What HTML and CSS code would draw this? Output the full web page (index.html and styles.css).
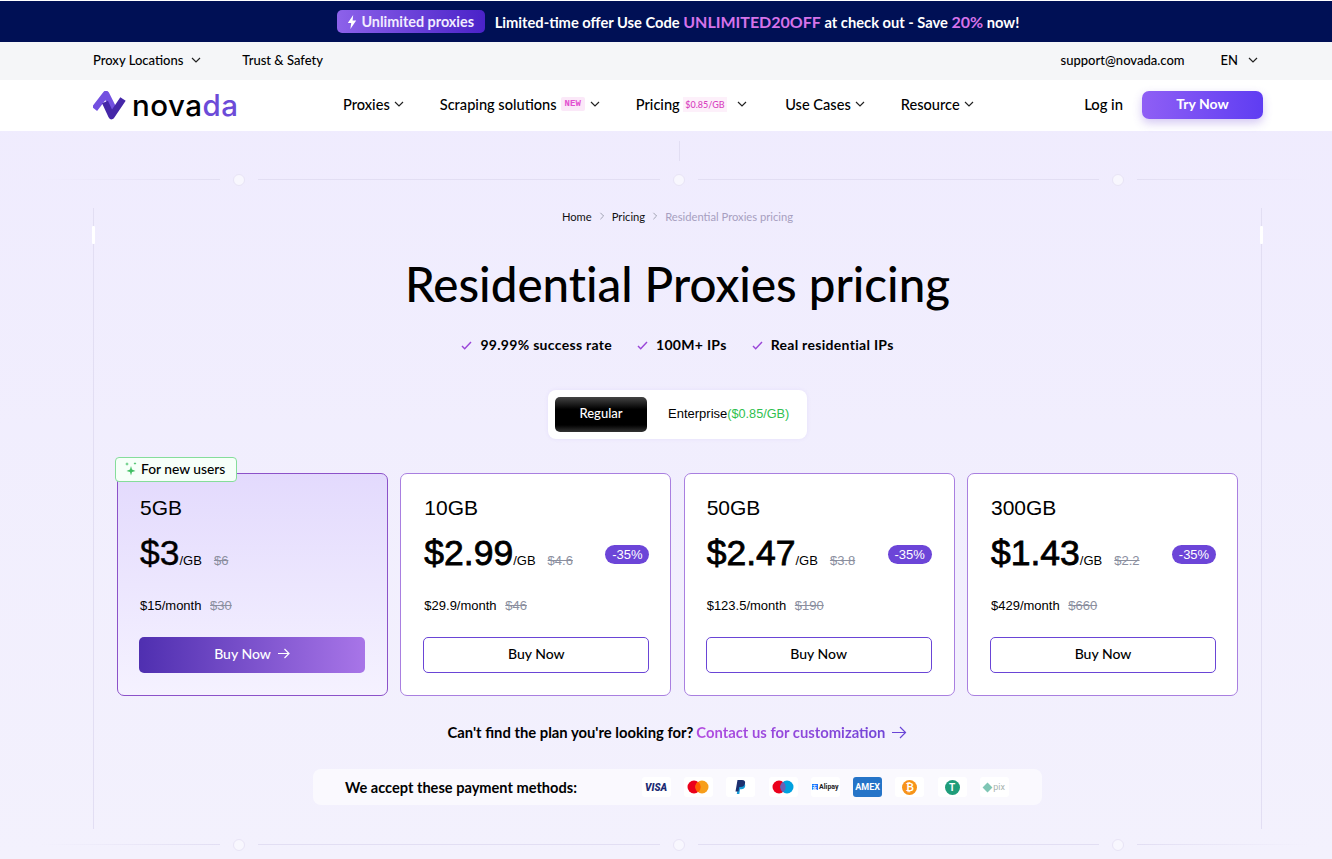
FILE: index.html
```html
<!DOCTYPE html>
<html lang="en">
<head>
  <meta charset="UTF-8" />
  <meta name="viewport" content="width=device-width, initial-scale=1.0"/>
  <title>Residential Proxies pricing</title>
  <link rel="stylesheet" href="styles.css">
</head>
<body>
  <div class="promo">
    <span class="promo-tag">
      <svg width="10" height="14" viewBox="0 0 10 14"><path d="M6.2 0 0.8 8h3.4L3.4 14 9.2 5.6H5.6z" fill="#fff"/></svg>
      Unlimited proxies
    </span>
    <span class="promo-text">Limited-time offer Use Code <b>UNLIMITED20OFF</b> at check out - Save <b>20%</b> now!</span>
  </div>

  <div class="topbar">
    <a class="top-link">Proxy Locations <svg class="chev chev-top" viewBox="0 0 10 6"><path d="M1 1l4 4 4-4"/></svg></a>
    <a class="top-link">Trust &amp; Safety</a>
    <a class="top-link top-mail">support@novada.com</a>
    <a class="top-link top-lang">EN <svg class="chev chev-lang" viewBox="0 0 10 6"><path d="M1 1l4 4 4-4"/></svg></a>
  </div>

  <header class="nav">
    <a class="logo">
      <svg width="33" height="29" viewBox="0 0 33 29" fill="none" stroke-width="6.500" stroke-linejoin="round">
        <path d="M1.500 18 13 3 21 19" stroke="#7350e0"/>
        <path d="M12 11 18.500 25 30 8" stroke="#4527a8"/>
      </svg>
      <span class="logo-text">nova<em>da</em></span>
    </a>
    <nav class="menu">
      <a>Proxies <svg class="chev" viewBox="0 0 10 6"><path d="M1 1l4 4 4-4"/></svg></a>
      <a>Scraping solutions <span class="tag-new">NEW</span> <svg class="chev chev-new" viewBox="0 0 10 6"><path d="M1 1l4 4 4-4"/></svg></a>
      <a>Pricing <span class="tag-price">$0.85/GB</span> <svg class="chev chev-price" viewBox="0 0 10 6"><path d="M1 1l4 4 4-4"/></svg></a>
      <a>Use Cases <svg class="chev" viewBox="0 0 10 6"><path d="M1 1l4 4 4-4"/></svg></a>
      <a>Resource <svg class="chev" viewBox="0 0 10 6"><path d="M1 1l4 4 4-4"/></svg></a>
    </nav>
    <a class="login">Log in</a>
    <a class="try">Try Now</a>
  </header>

  <main class="page">
    <div class="tick"></div>
    <div class="deco">
      <i class="fade-l"></i><u></u><i></i><u></u><i></i><u></u><i class="fade-r"></i>
    </div>

    <section class="frame">
      <span class="notch notch-l"></span>
      <span class="notch notch-r"></span>

      <div class="crumbs">
        <a>Home</a>
        <svg class="crumb-sep" viewBox="0 0 6 10"><path d="M1 1l4 4-4 4"/></svg>
        <a>Pricing</a>
        <svg class="crumb-sep" viewBox="0 0 6 10"><path d="M1 1l4 4-4 4"/></svg>
        <span>Residential Proxies pricing</span>
      </div>

      <h1>Residential Proxies pricing</h1>

      <ul class="perks">
        <li><svg viewBox="0 0 12 10"><path d="M1 5.500l3 3 7-7.500"/></svg>99.99% success rate</li>
        <li><svg viewBox="0 0 12 10"><path d="M1 5.500l3 3 7-7.500"/></svg>100M+ IPs</li>
        <li><svg viewBox="0 0 12 10"><path d="M1 5.500l3 3 7-7.500"/></svg>Real residential IPs</li>
      </ul>

      <div class="switch">
        <button class="switch-on">Regular</button>
        <button class="switch-off">Enterprise<span>($0.85/GB)</span></button>
      </div>

      <div class="plans">
        <article class="plan plan-first">
          <span class="new-users">
            <svg width="13" height="15" viewBox="0 0 13 15" fill="#3fbf63"><path d="M7 5l1 3.500L11.500 10 8 11l-1 3.500L6 11 2.500 10 6 8.500z"/><path d="M3 1l.5 1.500L5 3l-1.500.5L3 5l-.5-1.500L1 3l1.500-.5z"/><path d="M11 1l.4 1.100L12.500 2.500l-1.100.4L11 4l-.4-1.100L9.500 2.500l1.100-.4z"/></svg>
            For new users
          </span>
          <h3>5GB</h3>
          <div class="price"><strong>$3</strong><small>/GB</small><s>$6</s></div>
          <div class="month">$15/month <s>$30</s></div>
          <a class="buy buy-main">Buy Now <svg width="13" height="11" viewBox="0 0 13 11"><path d="M1 5.500h11M7.500 1l4.500 4.500L7.500 10"/></svg></a>
        </article>

        <article class="plan">
          <h3>10GB</h3>
          <div class="price"><strong>$2.99</strong><small>/GB</small><s>$4.6</s><em>-35%</em></div>
          <div class="month">$29.9/month <s>$46</s></div>
          <a class="buy">Buy Now</a>
        </article>

        <article class="plan">
          <h3>50GB</h3>
          <div class="price"><strong>$2.47</strong><small>/GB</small><s>$3.8</s><em>-35%</em></div>
          <div class="month">$123.5/month <s>$190</s></div>
          <a class="buy">Buy Now</a>
        </article>

        <article class="plan">
          <h3>300GB</h3>
          <div class="price"><strong>$1.43</strong><small>/GB</small><s>$2.2</s><em>-35%</em></div>
          <div class="month">$429/month <s>$660</s></div>
          <a class="buy">Buy Now</a>
        </article>
      </div>

      <p class="custom">Can't find the plan you're looking for? <a>Contact us for customization <svg width="16" height="13" viewBox="0 0 16 13"><path d="M1 6.500h13.500M9 1l5.500 5.500L9 12"/></svg></a></p>

      <div class="pay">
        <span class="pay-label">We accept these payment methods:</span>
        <div class="pay-list">
          <span class="pay-item pay-visa">VISA</span>
          <span class="pay-item"><svg width="22" height="14" viewBox="0 0 22 14"><circle cx="7" cy="7" r="6.500" fill="#eb001b"/><circle cx="15" cy="7" r="6.500" fill="#f79e1b"/><path d="M11 1.700a6.500 6.500 0 0 1 0 10.600 6.500 6.500 0 0 1 0-10.600z" fill="#ff5f00"/></svg></span>
          <span class="pay-item"><svg width="11" height="14" viewBox="0 0 11 14"><path d="M3.500 3h4c2 0 3 1 2.700 3-.4 2.200-1.800 3.300-3.800 3.300H5L4.300 14H1.800z" fill="#179bd7"/><path d="M2.500 0H7c2.500 0 3.500 1.500 3 3.500C9.500 6 8 7 5.800 7H4.300l-.8 4.500H.5z" fill="#1c2f6e"/></svg></span>
          <span class="pay-item"><svg width="22" height="14" viewBox="0 0 22 14"><circle cx="7" cy="7" r="6.500" fill="#eb001b"/><circle cx="15" cy="7" r="6.500" fill="#00a1df"/><path d="M11 1.700a6.500 6.500 0 0 1 0 10.600 6.500 6.500 0 0 1 0-10.600z" fill="#6c5fb5"/></svg></span>
          <span class="pay-item pay-alipay"><i>支</i>Alipay</span>
          <span class="pay-item pay-amex">AMEX</span>
          <span class="pay-item"><span class="coin coin-btc">₿</span></span>
          <span class="pay-item"><span class="coin coin-usdt">T</span></span>
          <span class="pay-item pay-pix"><i></i>pix</span>
        </div>
      </div>
    </section>

    <div class="deco deco-end">
      <i class="fade-l"></i><u></u><i></i><u></u><i></i><u></u><i class="fade-r"></i>
    </div>
  </main>
</body>
</html>
```

FILE: styles.css
```css
:root {
  --morado: #6c45d8;
  --morado-claro: #a97fe0;
  --tinta: #000000;
  --gris: #8b8f9f;
  --linea: #e2def3;
}

* {
  box-sizing: border-box;
}

body {
  margin: 0;
  font-family: 'Lato', 'Roboto', sans-serif;
  color: var(--tinta);
  background: linear-gradient(to bottom, #efebfe, #f3f1fd);
}

a {
  text-decoration: none;
  color: inherit;
}

.chev {
  width: 10px;
  height: 6px;
  fill: none;
  stroke: #222;
  stroke-width: 1.200;
  margin-left: 1px;
}

.chev-top {
  margin-left: 8px;
}

.chev-lang {
  margin-left: 10px;
}

.chev-new {
  margin-left: 2px;
}

.chev-price {
  margin-left: 7px;
  margin-right: 2px;
}

/* franja superior */
.promo {
  height: 42px;
  border-top: 1px solid #fff;
  background: #001055;
  padding: 0 69px 0 93px;
  display: flex;
  justify-content: center;
  align-items: center;
  gap: 10px;
  color: #fff;
  font-weight: 700;
}

.promo-tag {
  height: 23px;
  width: 148px;
  border-radius: 5px;
  background: linear-gradient(to right, #8d62ea, #4a22c8);
  display: flex;
  align-items: center;
  justify-content: center;
  gap: 4px;
  font-size: 14.400px;
  color: #f1ecff;
  white-space: nowrap;
}

.promo-text {
  font-size: 14.700px;
}

.promo-text b {
  font-size: 16px;
  font-weight: 700;
  color: #d673ea;
}

.topbar {
  height: 38px;
  background: #f5f6f8;
  padding: 0 69px 3px 93px;
  display: flex;
  align-items: center;
  font-size: 13px;
  font-weight: 500;
  gap: 36px;
}

.top-link {
  display: flex;
  align-items: center;
}

.top-link:first-child {
  margin-right: 5px;
}

.top-mail {
  margin-left: auto;
}

.top-lang {
  margin-right: 5px;
}

.nav {
  height: 51px;
  background: #fff;
  padding: 0 69px 3px 93px;
  display: flex;
  align-items: center;
}

.logo {
  width: 250px;
  display: flex;
  align-items: center;
  gap: 6px;
  margin-top: 3px;
}

.logo-text {
  font-family: 'Inter', sans-serif;
  font-size: 29.500px;
  font-weight: 500;
  letter-spacing: .5px;
  line-height: 29px;
}

.logo-text em {
  font-style: normal;
  color: #6c4bd8;
}

.menu {
  display: flex;
  gap: 36px;
  font-size: 14.600px;
  font-weight: 500;
}

.menu a {
  display: flex;
  align-items: center;
  gap: 3px;
}

.tag-new {
  margin-left: 1px;
  font-size: 9px;
  font-family: 'Liberation Mono', monospace;
  font-weight: 700;
  color: #e24fd0;
  background: #fbe8f8;
  padding: 2px 4px;
  border-radius: 2px;
}

.tag-price {
  font-size: 9px;
  color: #d83fc0;
  background: #fdf0fa;
  padding: 2px 2.500px;
}

.login {
  margin-left: auto;
  font-size: 14.800px;
  font-weight: 500;
}

.try {
  margin-left: 19px;
  width: 121px;
  height: 28px;
  margin-top: 2px;
  padding-bottom: 3px;
  border-radius: 7px;
  background: linear-gradient(to right, #8f5ff5, #5f3df2);
  box-shadow: 0 4px 10px rgba(108, 69, 216, .3);
  color: #fff;
  font-size: 14px;
  font-weight: 700;
  display: flex;
  align-items: center;
  justify-content: center;
}

/* cuerpo */
.page {
  position: relative;
  height: 728px;
  padding-top: 42px;
  overflow: hidden;
}

.tick {
  position: absolute;
  left: 679px;
  top: 10px;
  width: 1px;
  height: 20px;
  background: var(--linea);
}

.deco {
  display: grid;
  grid-template-columns: 180px 12px 402px 12px 401px 12px 173px;
  column-gap: 13px;
  align-items: center;
  margin-left: 40px;
  height: 13px;
}

.deco i {
  display: block;
  height: 1px;
  background: var(--linea);
}

.deco u {
  display: block;
  width: 12px;
  height: 12px;
  border-radius: 50%;
  background: #f8f7fe;
  border: 1px solid #e8e4f6;
}

.deco .fade-l {
  background: linear-gradient(to right, transparent, var(--linea));
}

.deco .fade-r {
  background: linear-gradient(to left, transparent, var(--linea));
}

.deco-end {
  margin-top: 9px;
}

.frame {
  position: relative;
  margin: 22px 70px 0 93px;
  height: 621px;
  border-left: 1px solid var(--linea);
  border-right: 1px solid var(--linea);
  padding: 0 23px;
  display: flex;
  flex-direction: column;
  align-items: center;
}

.notch {
  position: absolute;
  top: 18px;
  width: 3px;
  height: 18px;
  background: #fff;
  border-radius: 1px;
}

.notch-l {
  left: -2px;
}

.notch-r {
  right: -2px;
}

.crumbs {
  margin-top: 2px;
  display: flex;
  align-items: center;
  gap: 7px;
  height: 12px;
  font-size: 11.200px;
  color: #111;
}

.crumbs span {
  color: #a79fc0;
}

.crumb-sep {
  width: 6px;
  height: 8px;
  fill: none;
  stroke: #8b8f9f;
  stroke-width: 1;
}

h1 {
  margin: 32px 0 0;
  font-size: 47.500px;
  font-weight: 500;
  line-height: 60px;
  font-variant-ligatures: none;
}

.perks {
  list-style: none;
  margin: 21px 0 0;
  padding: 0;
  display: flex;
  gap: 25px;
  font-size: 14px;
  font-weight: 700;
  letter-spacing: .3px;
  line-height: 20px;
}

.perks li {
  display: flex;
  align-items: center;
  gap: 8px;
}

.perks svg {
  width: 11px;
  height: 9px;
  fill: none;
  stroke: #9a45d8;
  stroke-width: 1.600;
}

.switch {
  margin-top: 35px;
  width: 259px;
  height: 49px;
  background: #fff;
  border-radius: 8px;
  padding: 7px;
  display: flex;
  align-items: center;
  box-shadow: 0 0 4px rgba(108, 69, 216, .08);
}

.switch button {
  border: none;
  background: none;
  font-family: 'Liberation Sans', sans-serif;
  font-size: 13px;
  padding: 0;
  color: #000;
}

.switch .switch-on {
  width: 92px;
  height: 35px;
  padding-bottom: 3px;
  border-radius: 5px;
  color: #fff;
  font-family: 'Lato', sans-serif;
  font-weight: 500;
  background: linear-gradient(to bottom, #444 0, #000 35%, #000 80%, #333 100%);
}

.switch .switch-off {
  margin-left: 21px;
  margin-bottom: 3px;
}

.switch-off span {
  color: #2fbf4f;
  font-size: 12.700px;
}

.plans {
  margin-top: 34px;
  align-self: stretch;
  display: grid;
  grid-template-columns: repeat(4, 271px);
  justify-content: space-between;
}

.plan {
  position: relative;
  height: 223px;
  background: #fff;
  border: 1px solid var(--morado-claro);
  border-radius: 7px;
  padding: 21px 22px 0 21px;
  font-family: 'Liberation Sans', sans-serif;
}

.plan:nth-child(even) {
  padding-left: 22px;
  padding-right: 21px;
}

.plan-first {
  background: linear-gradient(to bottom, #e3dafd, #f5f2ff);
  border-color: #8c52c9;
}

.new-users {
  position: absolute;
  left: -3px;
  top: -17px;
  width: 122px;
  height: 25px;
  background: #f6fff9;
  border: 1px solid #85dd9b;
  border-radius: 4px;
  display: flex;
  align-items: center;
  gap: 4px;
  padding: 0 0 3px 8px;
  font-family: 'Lato', sans-serif;
  font-size: 13.800px;
  font-weight: 500;
}

.plan h3 {
  margin: 0;
  font-size: 21px;
  font-weight: 400;
  line-height: 26px;
  padding-left: 1px;
}

.price {
  margin-top: 10px;
  height: 44px;
  display: flex;
  align-items: baseline;
  padding-left: 1px;
}

.price strong {
  font-size: 35.500px;
  font-weight: 400;
  line-height: 44px;
  -webkit-text-stroke: .8px #000;
}

.plan-first .price strong {
  -webkit-text-stroke: .4px #000;
}

.price small {
  font-size: 13px;
}

.price s {
  margin-left: 12px;
  font-size: 13px;
  color: var(--gris);
}

.price em {
  margin-left: auto;
  margin-top: 2px;
  align-self: center;
  width: 44px;
  height: 19px;
  border-radius: 10px;
  background: var(--morado);
  color: #fff;
  font-style: normal;
  font-size: 13px;
  line-height: 19px;
  text-align: center;
}

.month {
  margin-top: 22px;
  font-size: 13px;
  line-height: 18px;
  padding-left: 1px;
}

.month s {
  margin-left: 5px;
  color: var(--gris);
}

.buy {
  margin-top: 22px;
  height: 36px;
  padding-bottom: 3px;
  border: 1px solid #6a45d6;
  border-radius: 5px;
  display: flex;
  align-items: center;
  justify-content: center;
  gap: 6px;
  font-family: 'Lato', sans-serif;
  font-size: 14px;
  font-weight: 500;
}

.buy svg {
  fill: none;
  stroke: #fff;
  stroke-width: 1.200;
}

.buy-main {
  border: none;
  color: #fff;
  background: linear-gradient(to right, #4f2fb0, #a875e8);
}

.custom {
  margin: 26px 0 0;
  font-size: 14.800px;
  font-weight: 700;
  line-height: 20px;
  display: flex;
  gap: 3px;
}

.custom a {
  display: flex;
  align-items: center;
  gap: 6px;
  background: linear-gradient(to right, #b34be0, #6a45d6);
  -webkit-background-clip: text;
  background-clip: text;
  color: transparent;
}

.custom svg {
  fill: none;
  stroke: #6a45d6;
  stroke-width: 1.200;
}

.pay {
  margin-top: 27px;
  width: 729px;
  height: 36px;
  border-radius: 8px;
  background: rgba(255, 255, 255, .6);
  padding: 0 33px 0 32px;
  display: flex;
  align-items: center;
  font-size: 14.600px;
  font-weight: 700;
}

.pay-list {
  margin-left: auto;
  display: flex;
  gap: 13.300px;
}

.pay-item {
  width: 29px;
  height: 20px;
  border-radius: 3px;
  background: #fff;
  display: flex;
  align-items: center;
  justify-content: center;
  font-family: 'Roboto', sans-serif;
}

.pay-visa {
  font-size: 10px;
  font-weight: 900;
  font-style: italic;
  color: #1a2a72;
}

.pay-alipay {
  font-size: 7px;
  font-weight: 700;
  color: #222;
  gap: 1px;
}

.pay-alipay i {
  width: 6px;
  height: 6px;
  background: #1677ff;
  color: #fff;
  font-style: normal;
  font-size: 5px;
  line-height: 6px;
  font-family: 'Noto Sans CJK SC', sans-serif;
}

.pay-amex {
  background: #2574c8;
  color: #fff;
  font-size: 9px;
  font-weight: 700;
}

.coin {
  width: 15px;
  height: 15px;
  border-radius: 50%;
  color: #fff;
  font-size: 10px;
  font-weight: 700;
  line-height: 15px;
  text-align: center;
}

.coin-btc {
  background: #f7931a;
}

.coin-usdt {
  background: #1f9d7a;
}

.pay-pix {
  color: #a9b4b0;
  font-size: 9px;
  font-weight: 400;
  gap: 2px;
}

.pay-pix i {
  width: 7px;
  height: 7px;
  background: #7fc6b4;
  transform: rotate(45deg);
}
```
